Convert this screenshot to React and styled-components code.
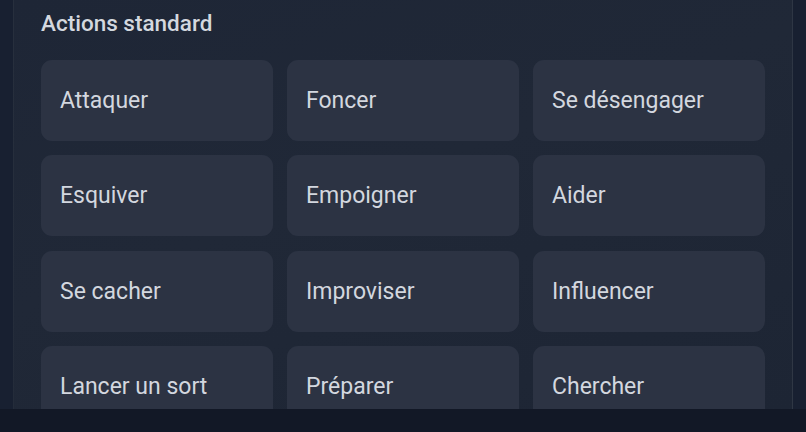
import React from "react";
import styled, { createGlobalStyle } from "styled-components";

const GlobalStyle = createGlobalStyle`
  html, body {
    margin: 0;
    padding: 0;
    background: #182031;
    font-family: Roboto, "Noto Sans", sans-serif;
    overflow: hidden;
  }
`;

const Page = styled.div`
  display: flex;
  flex-direction: column;
  height: 432px;
`;

const Main = styled.div`
  flex: 1;
  display: flex;
  padding: 0 13px;
  overflow: hidden;
`;

const Panel = styled.section`
  flex: 1;
  padding: 10px 27px 0 27px;
  background: linear-gradient(160deg, #1e2636 0%, #202837 45%, #1d2534 100%);
  border-left: 1px solid rgba(255, 255, 255, 0.03);
  border-right: 1px solid rgba(255, 255, 255, 0.07);
  overflow: hidden;
`;

const Title = styled.h2`
  margin: 0 0 24px 0;
  font-size: 22.5px;
  line-height: 26px;
  font-weight: 500;
  color: #d4d8df;
`;

const Grid = styled.div`
  display: grid;
  grid-template-columns: repeat(3, 1fr);
  column-gap: 14px;
  row-gap: 14.3px;
`;

const Action = styled.button`
  height: 81px;
  display: flex;
  align-items: center;
  padding: 0 19px;
  border: none;
  border-radius: 11px;
  background: #2c3343;
  color: #d3d7df;
  font-family: inherit;
  font-size: 23px;
  font-weight: 400;
  text-align: left;
  cursor: pointer;
`;

const Footer = styled.div`
  height: 23px;
  background: #121826;
`;

const actions = [
  "Attaquer",
  "Foncer",
  "Se désengager",
  "Esquiver",
  "Empoigner",
  "Aider",
  "Se cacher",
  "Improviser",
  "Influencer",
  "Lancer un sort",
  "Préparer",
  "Chercher",
];

export default function App() {
  return (
    <Page>
      <GlobalStyle />
      <Main>
        <Panel>
          <Title>Actions standard</Title>
          <Grid>
            {actions.map((a) => (
              <Action key={a}>{a}</Action>
            ))}
          </Grid>
        </Panel>
      </Main>
      <Footer />
    </Page>
  );
}
